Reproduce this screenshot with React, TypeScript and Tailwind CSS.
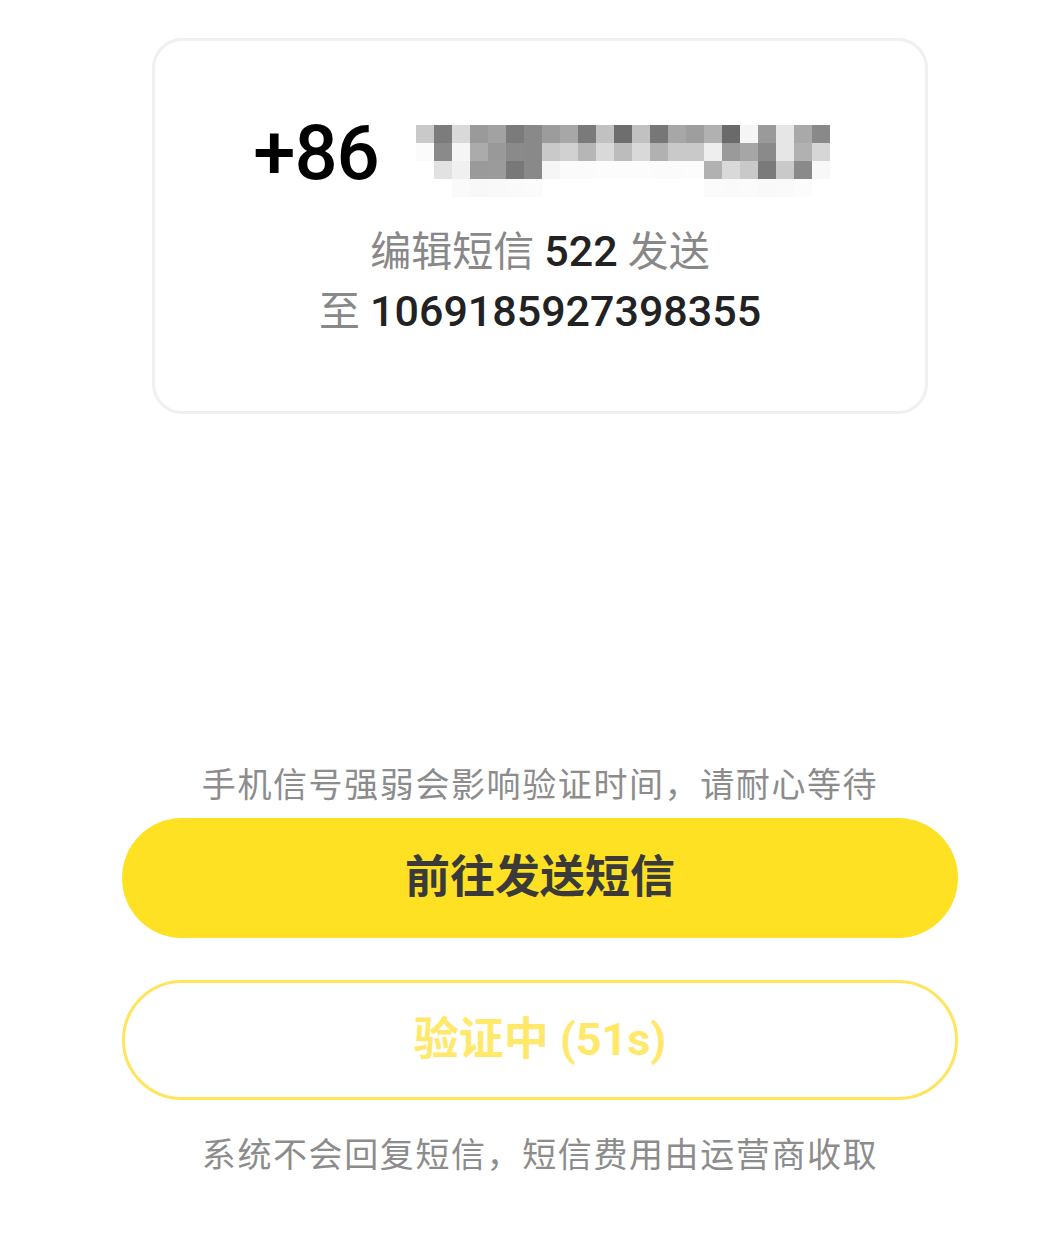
const cjk = "font-['Roboto','Noto_Sans_CJK_SC',sans-serif]";

// censored phone number, 3 rows of grey squares (each 18px)
const mosaic = [
  ["#c9c9c9", "#7c7c7c", "#d9d9d9", "#9a9a9a", "#a2a2a2", "#7b7b7b", "#898989", "#9c9c9c", "#a7a7a7", "#7a7a7a", "#c1c1c1", "#6e6e6e", "#c1c1c1", "#777777", "#a7a7a7", "#9e9e9e", "#b1b1b1", "#6a6a6a", "#f5f5f5", "#9a9a9a", "#e6e6e6", "#a9a9a9", "#898989"],
  ["#fbfbfb", "#8a8a8a", "#f5f5f5", "#ababab", "#999999", "#8a8a8a", "#898989", "#c9c9c9", "#d1d1d1", "#b6b6b6", "#d9d9d9", "#bcbcbc", "#d9d9d9", "#b1b1b1", "#c9c9c9", "#c9c9c9", "#eeeeee", "#9a9a9a", "#a6a6a6", "#8a8a8a", "#e6e6e6", "#b1b1b1", "#d6d6d6"],
  ["#ffffff", "#e2e2e2", "#f0f0f0", "#9a9a9a", "#9b9b9b", "#787878", "#898989", "#f6f6f6", "#fbfbfb", "#fbfbfb", "#fcfcfc", "#fcfcfc", "#fcfcfc", "#fbfbfb", "#fbfbfb", "#fcfcfc", "#b1b1b1", "#d9d9d9", "#c9c9c9", "#7a7a7a", "#c9c9c9", "#8a8a8a", "#f8f8f8"],
  ["#ffffff", "#ffffff", "#fafafa", "#f8f8f8", "#f9f9f9", "#fafafa", "#fbfbfb", "#ffffff", "#ffffff", "#ffffff", "#ffffff", "#ffffff", "#ffffff", "#ffffff", "#ffffff", "#ffffff", "#fbfbfb", "#fafafa", "#fbfbfb", "#f9f9f9", "#fafafa", "#fcfcfc", "#ffffff"],
];

function Mosaic() {
  return (
    <svg width="440" height="100" viewBox="0 0 440 100" className="shrink-0">
      <rect x="20" y="58" width="8" height="20" fill="#000" />
      {mosaic.map((row, r) =>
        row.map((c, i) => (
          <rect key={r + "-" + i} x={2 + i * 18} y={22 + r * 18} width="18" height="18" fill={c} />
        ))
      )}
    </svg>
  );
}

export default function App() {
  return (
    <div className={`w-[1046px] h-[1233px] bg-white flex flex-col items-center pl-[34px] ${cjk}`}>
      {/* number card */}
      <div className="mt-[38px] w-[776px] h-[376px] rounded-[30px] border-[3px] border-[#f0f0f0] flex flex-col items-center pt-[62px]">
        <div className="h-[100px] flex items-center pl-[27px]">
          <span className="text-[76px] leading-none font-medium text-black tracking-[-1px]">+86</span>
          <div className="ml-[35px]">
            <Mosaic />
          </div>
        </div>
        <div className="mt-[19px] text-[41px] leading-[59px] text-[#888888]">
          编辑短信 <span className="text-[43px] text-[#222222] font-medium">522</span> 发送
        </div>
        <div className="text-[41px] leading-[59px] text-[#888888]">
          至 <span className="text-[43px] text-[#222222] font-medium">1069185927398355</span>
        </div>
      </div>

      <p className="mt-[351px] text-[34px] leading-[40px] text-[#8c8c8c] tracking-[1.6px]">
        手机信号强弱会影响验证时间，请耐心等待
      </p>

      <button className="mt-[13px] w-[836px] h-[120px] rounded-full bg-[#ffe124] text-[45px] font-bold text-[#3a3a3a] flex items-center justify-center">
        前往发送短信
      </button>

      <button className="mt-[42px] w-[836px] h-[120px] rounded-full border-[3px] border-[#ffe55e] bg-white text-[45px] font-bold text-[#ffe86a] flex items-center justify-center">
        验证中 (51s)
      </button>

      <p className="mt-[35px] text-[34px] leading-[40px] text-[#8c8c8c] tracking-[1.6px]">
        系统不会回复短信，短信费用由运营商收取
      </p>
    </div>
  );
}
